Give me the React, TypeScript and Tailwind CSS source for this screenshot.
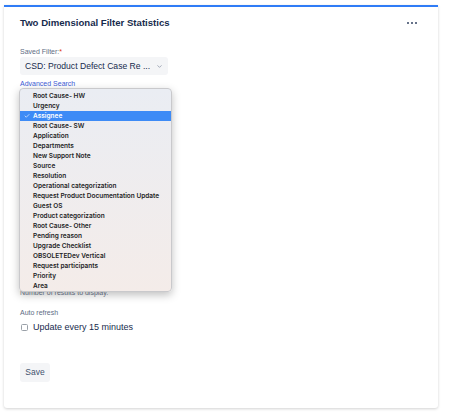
import { Check, ChevronDown } from 'lucide-react'

const options = [
  'Root Cause- HW',
  'Urgency',
  'Assignee',
  'Root Cause- SW',
  'Application',
  'Departments',
  'New Support Note',
  'Source',
  'Resolution',
  'Operational categorization',
  'Request Product Documentation Update',
  'Guest OS',
  'Product categorization',
  'Root Cause- Other',
  'Pending reason',
  'Upgrade Checklist',
  'OBSOLETEDev Vertical',
  'Request participants',
  'Priority',
  'Area',
]

const selected = 'Assignee'

function OptionsMenu() {
  return (
    <div className="absolute left-[15px] top-[81px] w-[153px] h-[204px] rounded-[4px] border border-[#c9c9cc] bg-gradient-to-b from-[#eaedf3] to-[#f4ece9] shadow-[0_3px_8px_rgba(0,0,0,0.25)] pt-[2px] font-['Inter',sans-serif]">
      {options.map((opt) => {
        const active = opt === selected
        return (
          <div
            key={opt}
            className={`relative flex items-center h-[10px] pl-[13px] text-[6.5px] font-semibold leading-none whitespace-nowrap ${
              active ? 'bg-[#3d8bf6] text-white' : 'text-[#1d1d1f]'
            }`}
          >
            {active && (
              <Check className="absolute left-[4px] w-[6px] h-[6px]" strokeWidth={2.5} />
            )}
            {opt}
          </div>
        )
      })}
    </div>
  )
}

export default function App() {
  return (
    <div className="w-[452px] h-[418px] bg-white pt-[5px] pl-[4px] font-['Liberation_Sans',Arial,sans-serif]">
      <div className="relative w-[434px] h-[403px] bg-white border-t-2 border-[#2f7cf6] rounded-b-[3px] shadow-[0_1px_3px_rgba(0,0,0,0.18)] px-[16px]">
        <div className="flex items-center justify-between h-[30px] pt-[2px]">
          <h2 className="text-[9.6px] font-bold text-[#172b4d]">
            Two Dimensional Filter Statistics
          </h2>
          <span className="mr-[5px] flex gap-[1.5px]">
            <span className="w-[2.5px] h-[2.5px] rounded-full bg-[#344563]" />
            <span className="w-[2.5px] h-[2.5px] rounded-full bg-[#344563]" />
            <span className="w-[2.5px] h-[2.5px] rounded-full bg-[#344563]" />
          </span>
        </div>

        <div className="mt-[11px] text-[7px] leading-none text-[#5e6c84]">
          Saved Filter:<span className="text-[#de350b] align-top">*</span>
        </div>
        <div className="mt-[2px] flex items-center justify-between w-[148px] h-[18px] rounded-[3px] bg-[#f4f5f7] pl-[5px] pr-[5px] text-[8.6px] text-[#172b4d]">
          <span>CSD: Product Defect Case Re ...</span>
          <ChevronDown className="w-[7px] h-[7px] text-[#6b778c]" strokeWidth={2} />
        </div>
        <div className="mt-[5px] text-[7px] leading-none text-[#3d5bd6]">
          Advanced Search
        </div>

        <div className="h-[202px]" />

        <div className="text-[7px] leading-none text-[#6b778c]">
          Number of results to display.
        </div>

        <div className="mt-[13px] text-[7px] leading-none text-[#5e6c84]">
          Auto refresh
        </div>
        <label className="mt-[5px] flex items-center gap-[5px] text-[9px] text-[#172b4d]">
          <span className="ml-[1px] w-[7px] h-[7px] rounded-[1.5px] border border-[#9aa0a8] bg-white" />
          Update every 15 minutes
        </label>

        <button className="mt-[28px] w-[30px] h-[19px] rounded-[3px] bg-[#f4f5f7] text-[8.5px] text-[#42526e]">
          Save
        </button>

        <OptionsMenu />
      </div>
    </div>
  )
}
